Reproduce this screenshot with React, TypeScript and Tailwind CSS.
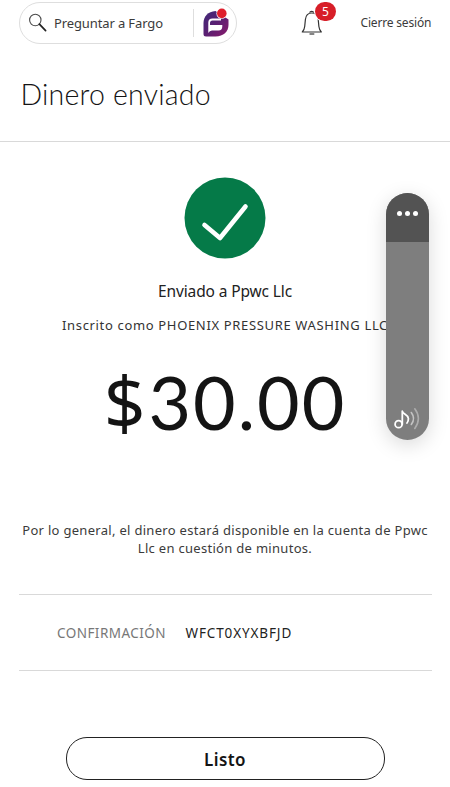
import React from "react";

function SearchIcon() {
  return (
    <svg width="20" height="20" viewBox="0 0 20 20" fill="none" className="shrink-0">
      <circle cx="7.3" cy="7" r="5.7" stroke="#4a4a4a" strokeWidth="1.1" />
      <path d="M11.4 11.2L17.6 17.6" stroke="#222" strokeWidth="1.7" strokeLinecap="round" />
    </svg>
  );
}

function FargoIcon() {
  return (
    <svg width="28" height="30" viewBox="0 0 28 30" className="shrink-0">
      <defs>
        <linearGradient id="fargo" x1="0" y1="0" x2="1" y2="1">
          <stop offset="0" stopColor="#3f2a78" />
          <stop offset="0.5" stopColor="#5a1f72" />
          <stop offset="1" stopColor="#8b1a6b" />
        </linearGradient>
      </defs>
      <path
        d="M13.5 3C6 3.5 1.500 8.500 1.500 15V26Q1.500 28.500 4 28.500H13.500C21.500 28.500 26.500 23.500 26.500 17V11.500Z"
        fill="url(#fargo)"
      />
      <path
        d="M6.300 25V14.500Q6.300 10.500 10.500 10.500H19V12.500H10.500Q8 12.500 8 15V17H20.300V18.500Q20.300 22.500 16.500 22.500H10Q7.500 22.500 6.300 25Z"
        fill="#fff"
      />
      <circle cx="19.800" cy="5.400" r="5.400" fill="#fff" />
      <circle cx="19.800" cy="5.400" r="4.800" fill="#df1f2d" />
    </svg>
  );
}

function BellIcon() {
  return (
    <svg width="22" height="26" viewBox="0 0 22 26" fill="none" stroke="#333" strokeWidth="1.200">
      <path d="M8.600 2.600Q9 1.300 10.700 1.300Q12.400 1.300 12.800 2.600" />
      <path d="M1.300 22H20.300Q18.300 20 17.900 16.500L17.200 9.500Q16.500 3 10.800 3Q5.100 3 4.400 9.500L3.700 16.500Q3.300 20 1.300 22Z" strokeLinejoin="round" />
      <path d="M8.500 24H13.300" />
    </svg>
  );
}

function MusicIcon() {
  return (
    <svg width="28" height="24" viewBox="0 0 28 24" fill="none" strokeLinecap="round">
      <circle cx="4.600" cy="17.200" r="3.500" stroke="#fff" strokeWidth="1.800" />
      <path d="M8.300 17.200V4.200C8.800 7.500 14 7.300 14.400 11.500Q14.500 14.200 13 16" stroke="#fff" strokeWidth="1.800" strokeLinejoin="round" />
      <path d="M17.300 5.500Q21.800 11.500 17.300 17.500" stroke="#c4c4c4" strokeWidth="1.600" />
      <path d="M20.800 1.800Q28 11.500 20.800 21.500" stroke="#adadad" strokeWidth="1.600" />
    </svg>
  );
}

function VolumePanel() {
  return (
    <aside className="absolute left-[386px] top-[193px] flex h-[247px] w-[43px] flex-col justify-between overflow-hidden rounded-full bg-[#7e7e7e] shadow-[0_5px_20px_rgba(0,0,0,0.15)]">
      <div className="flex h-[49px] items-center justify-center gap-[3px] bg-[#535353] pb-[8px]">
        <span className="size-[5px] rounded-full bg-white" />
        <span className="size-[5px] rounded-full bg-white" />
        <span className="size-[5px] rounded-full bg-white" />
      </div>
      <div className="flex justify-center pb-[9px]">
        <MusicIcon />
      </div>
    </aside>
  );
}

export default function App() {
  return (
    <div className="relative flex h-[787px] w-[450px] flex-col overflow-hidden bg-white font-['Noto_Sans',sans-serif] text-[#3b3b3b]">
      <header className="flex h-[46px] shrink-0 items-start">
        <div className="ml-[19px] mt-[2px] flex h-[42px] w-[218px] shrink-0 items-center rounded-full border border-[#dedede] pl-[8px]">
          <SearchIcon />
          <span className="ml-[6px] w-[139px] whitespace-nowrap pt-px text-[13px] tracking-[-0.120px]">Preguntar a Fargo</span>
          <span className="h-[28px] w-px bg-[#dedede]" />
          <span className="-mt-px ml-[8px]">
            <FargoIcon />
          </span>
        </div>
        <div className="relative ml-[64px] mt-[10px]">
          <BellIcon />
          <span className="absolute -top-[8px] left-[14px] flex h-[19px] w-[21px] items-center justify-center rounded-full bg-[#d71e28] text-[12px] leading-none text-white ring-1 ring-white">
            5
          </span>
        </div>
        <a className="ml-[37.500px] mt-[13px] whitespace-nowrap text-[12px] leading-[20px] tracking-[-0.180px]">Cierre sesión</a>
      </header>

      <div className="h-[96px] shrink-0 border-b border-[#d9d9d9] pl-[20.500px] pt-[30px]">
        <h1 className="whitespace-nowrap font-[Lato,sans-serif] text-[28.500px] font-light leading-[36px] tracking-[0.200px] text-[#141414]">Dinero enviado</h1>
      </div>

      <main className="flex flex-col items-center">
        <svg className="mt-[35px]" width="82" height="82" viewBox="0 0 82 82" fill="none">
          <circle cx="41" cy="41" r="40.500" fill="#057a48" />
          <path d="M20.500 48L36 61L61.500 29.500" stroke="#fff" strokeWidth="4.600" strokeLinecap="round" strokeLinejoin="round" />
        </svg>
        <p className="mt-[20px] whitespace-nowrap text-[15.500px] leading-[24px] tracking-[-0.130px] text-[#222]">Enviado a Ppwc Llc</p>
        <p className="mt-[12px] whitespace-nowrap text-[13px] leading-[20px] tracking-[0.660px] text-[#333]">
          Inscrito como PHOENIX PRESSURE WASHING LLC
        </p>
        <p className="mt-[17px] flex h-[100px] items-baseline whitespace-nowrap text-[#141414]">
          <span className="text-[73px] leading-[100px]">$</span>
          <span className="ml-[3px] font-[Lato,sans-serif] text-[73.500px] leading-[100px] tracking-[2px]">30.00</span>
        </p>
        <p className="mt-[69px] whitespace-nowrap text-center text-[13px] leading-[18px] tracking-[0.300px]">
          Por lo general, el dinero estará disponible en la cuenta de Ppwc
          <br />
          Llc en cuestión de minutos.
        </p>
        <dl className="mt-[37px] flex h-[77px] w-[413px] items-center self-start border-y border-[#d9d9d9] ml-[19px] pl-[38px] pt-px text-[13.500px]">
          <dt className="w-[128.500px] tracking-[0.450px] text-[#777]">CONFIRMACIÓN</dt>
          <dd className="tracking-[0.880px] text-[#222]">WFCT0XYXBFJD</dd>
        </dl>
        <button className="mt-[66px] h-[43px] w-[319px] rounded-[21px] border border-[#222] pt-[2px] text-[17px] font-semibold tracking-[0.400px] text-[#141414]">
          Listo
        </button>
      </main>
      <VolumePanel />
    </div>
  );
}
